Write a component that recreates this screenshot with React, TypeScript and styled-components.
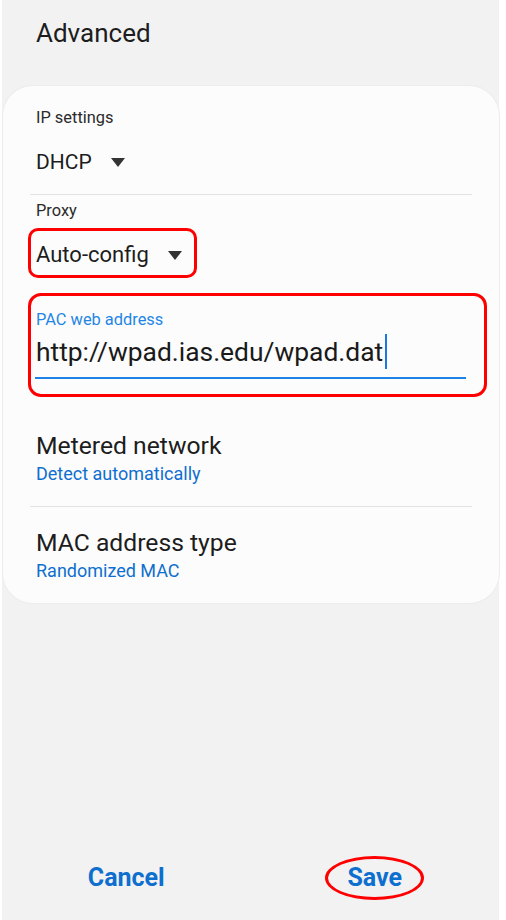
import styled, { createGlobalStyle } from "styled-components";

const GlobalStyle = createGlobalStyle`
  html, body {
    margin: 0;
    padding: 0;
    background: #ffffff;
  }
  body {
    font-family: Roboto, "Noto Sans", "Liberation Sans", sans-serif;
    color: #1f1f1f;
  }
`;

const Screen = styled.div`
  width: 497px;
  height: 920px;
  margin-left: 2px;
  background: #f2f2f2;
  display: flex;
  flex-direction: column;
`;

const Header = styled.h1`
  margin: 0;
  padding: 17px 0 0 34px;
  height: 32px;
  margin-bottom: 37px;
  font-size: 26px;
  line-height: 32px;
  font-weight: 400;
  color: #1d1d1d;
`;

const Card = styled.div`
  margin-left: 1px;
  width: 496px;
  box-sizing: border-box;
  background: #fcfcfc;
  border-radius: 30px;
  box-shadow: 0 0 0 1px #ececec;
  padding: 0 27px 21px 27px;
`;

const Section = styled.div`
  padding-left: 6px;
`;

const Label = styled.div<{ $top: number }>`
  margin-top: ${(p) => p.$top}px;
  font-size: 16.4px;
  line-height: 20px;
  color: #2a2a2a;
`;

const SelectRow = styled.div<{ $top?: number; $size?: number }>`
  margin-top: ${(p) => p.$top ?? 0}px;
  display: flex;
  align-items: center;
  gap: 19px;
  font-size: ${(p) => p.$size ?? 22}px;
  line-height: 40px;
  color: #1d1d1d;
`;

const Caret = () => (
  <svg width="14" height="9" viewBox="0 0 14 9">
    <path d="M0 0 L14 0 L7 9 Z" fill="#333333" />
  </svg>
);

const Divider = styled.div<{ $top: number }>`
  margin-top: ${(p) => p.$top}px;
  height: 1px;
  background: #e2e2e2;
`;

const Highlight = styled.div<{ $top: number }>`
  margin-top: ${(p) => p.$top}px;
  border: 3px solid #ff0000;
  border-radius: 10px;
`;

const SelectHighlight = styled(Highlight)`
  display: inline-flex;
  margin-left: -8px;
  padding: 4px 12px 0 5px;
`;

const FieldHighlight = styled(Highlight)`
  margin-left: -8px;
  width: 459px;
  box-sizing: border-box;
  padding: 14px 0 15px 5px;
  border-radius: 13px;
`;

const FieldLabel = styled.div`
  font-size: 16.4px;
  line-height: 20px;
  color: #1f86e6;
`;

const FieldValue = styled.div`
  margin-top: 4px;
  font-size: 26.4px;
  line-height: 32px;
  color: #1a1a1a;
  display: flex;
  align-items: center;
`;

const Cursor = styled.span`
  display: inline-block;
  width: 2px;
  height: 35px;
  margin-left: 2px;
  background: #1a78e0;
`;

const Underline = styled.div`
  margin-top: 8px;
  width: 431px;
  margin-left: -1px;
  height: 2px;
  background: #1c82e6;
`;

const ItemTitle = styled.div<{ $top: number }>`
  margin-top: ${(p) => p.$top}px;
  font-size: 24.7px;
  line-height: 30px;
  color: #1d1d1d;
`;

const ItemValue = styled.div`
  margin-top: 2px;
  font-size: 18px;
  line-height: 22px;
  color: #0f6fcf;
`;

const Footer = styled.div`
  margin-top: auto;
  display: flex;
  align-items: center;
  padding-bottom: 20px;
`;

const Action = styled.div`
  flex: 1;
  display: flex;
  justify-content: center;
  align-items: center;
`;

const ActionButton = styled.button<{ $circled?: boolean }>`
  font-family: Roboto, "Noto Sans", "Liberation Sans", sans-serif;
  background: none;
  border: ${(p) => (p.$circled ? "3px solid #ff0000" : "none")};
  border-radius: 50%;
  padding: ${(p) => (p.$circled ? "4px 19px" : "0")};
  font-size: 25px;
  line-height: 30px;
  font-weight: 700;
  color: #0f6fcf;
  cursor: pointer;
`;

export default function App() {
  return (
    <>
      <GlobalStyle />
      <Screen>
        <Header>Advanced</Header>
        <Card>
          <Section>
            <Label $top={22}>IP settings</Label>
            <SelectRow $top={14} $size={21}>
              DHCP <Caret />
            </SelectRow>
          </Section>
          <Divider $top={12} />
          <Section>
            <Label $top={6}>Proxy</Label>
            <SelectHighlight $top={7}>
              <SelectRow>
                Auto-config <Caret />
              </SelectRow>
            </SelectHighlight>
            <FieldHighlight $top={15}>
              <FieldLabel>PAC web address</FieldLabel>
              <FieldValue>
                http://wpad.ias.edu/wpad.dat
                <Cursor />
              </FieldValue>
              <Underline />
            </FieldHighlight>
            <ItemTitle $top={34}>Metered network</ItemTitle>
            <ItemValue>Detect automatically</ItemValue>
          </Section>
          <Divider $top={21} />
          <Section>
            <ItemTitle $top={21}>MAC address type</ItemTitle>
            <ItemValue>Randomized MAC</ItemValue>
          </Section>
        </Card>
        <Footer>
          <Action>
            <ActionButton type="button">Cancel</ActionButton>
          </Action>
          <Action>
            <ActionButton type="button" $circled>
              Save
            </ActionButton>
          </Action>
        </Footer>
      </Screen>
    </>
  );
}
